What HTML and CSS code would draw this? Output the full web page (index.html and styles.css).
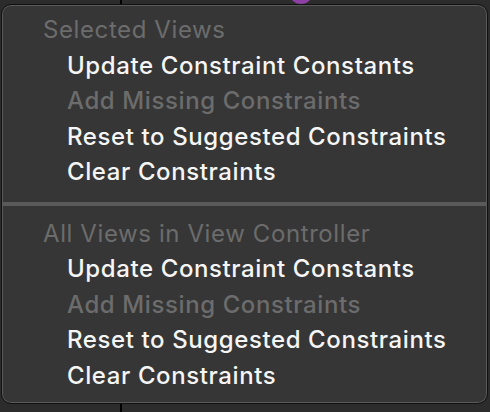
FILE: index.html
```html
<!DOCTYPE html>
<html>
<head>
<meta charset="utf-8">
<link rel="stylesheet" href="styles.css">
</head>
<body>
<div class="canvas">
  <div class="vline"></div>
  <div class="dot"></div>
  <div class="menu">
    <div class="section">
      <div class="row header">Selected Views</div>
      <div class="row item">Update Constraint Constants</div>
      <div class="row item disabled">Add Missing Constraints</div>
      <div class="row item">Reset to Suggested Constraints</div>
      <div class="row item">Clear Constraints</div>
    </div>
    <div class="sep"></div>
    <div class="section">
      <div class="row header">All Views in View Controller</div>
      <div class="row item">Update Constraint Constants</div>
      <div class="row item disabled">Add Missing Constraints</div>
      <div class="row item">Reset to Suggested Constraints</div>
      <div class="row item">Clear Constraints</div>
    </div>
  </div>
</div>
</body>
</html>
```
FILE: styles.css
```css
html, body {
  margin: 0;
  padding: 0;
  background: #2c2c2c;
}
.canvas {
  position: relative;
  width: 490px;
  height: 412px;
  overflow: hidden;
  padding: 4px 2px 0 1px;
  box-sizing: border-box;
}
.vline {
  position: absolute;
  left: 120px;
  top: 0;
  width: 2px;
  height: 412px;
  background: #000;
}
.dot {
  position: absolute;
  left: 289px;
  top: -20px;
  width: 24px;
  height: 24px;
  border-radius: 50%;
  background: #8e3fa6;
}
.menu {
  position: relative;
  height: 400px;
  box-sizing: border-box;
  background: #363636;
  border: 1px solid #111;
  border-radius: 10px;
  box-shadow: inset 0 0 0 1px #5a5a5a;
  padding-top: 7px;
  font-family: Inter, "Noto Sans", sans-serif;
  font-size: 24px;
  -webkit-font-smoothing: antialiased;
}
.row {
  height: 35.5px;
  line-height: 35.5px;
  white-space: nowrap;
}
.header {
  padding-left: 41px;
  color: #6c6c6c;
  letter-spacing: 0.6px;
}
.item {
  padding-left: 65px;
  color: #f5f5f5;
  font-weight: 500;
  letter-spacing: 0.6px;
}
.item.disabled {
  color: #6c6c6c;
}
.sep {
  height: 4px;
  background: #5a5a5a;
  margin: 12px 1px 10px;
}
```
